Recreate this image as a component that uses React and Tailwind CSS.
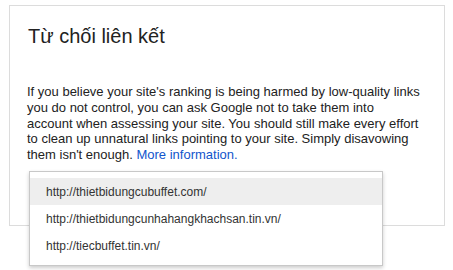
export default function App() {
  const items = [
    "http://thietbidungcubuffet.com/",
    "http://thietbidungcunhahangkhachsan.tin.vn/",
    "http://tiecbuffet.tin.vn/",
  ];
  return (
    <div
      className="relative w-[453px] h-[270px] bg-white overflow-hidden"
      style={{ fontFamily: '"Liberation Sans", Arial, sans-serif' }}
    >
      <div className="ml-[9px] mt-[5px] w-[436px] h-[221px] border border-[#dcdcdc] pl-[18px] pr-[10px] pt-[16px]">
        <h1 className="text-[20px] leading-[28px] text-[#222]">Từ chối liên kết</h1>
        <p className="mt-[34px] text-[13px] leading-[15.75px] text-[#222] -ml-px whitespace-nowrap">
          If you believe your site's ranking is being harmed by low-quality links
          <br />
          you do not control, you can ask Google not to take them into
          <br />
          account when assessing your site. You should still make every effort
          <br />
          to clean up unnatural links pointing to your site. Simply disavowing
          <br />
          them isn't enough. <span className="text-[#15c]">More information.</span>
        </p>
      </div>
      <div className="absolute left-[29px] top-[171px] w-[354px] border border-[#c8c8c8] bg-white pt-[6px] pb-[6px] shadow-[0_2px_4px_rgba(0,0,0,0.2)]">
        {items.map((t, i) => (
          <div
            key={t}
            className={`h-[27px] flex items-center pl-[16px] text-[12px] text-[#333] ${i === 0 ? "bg-[#eeeeee]" : ""}`}
          >
            {t}
          </div>
        ))}
      </div>
    </div>
  );
}
